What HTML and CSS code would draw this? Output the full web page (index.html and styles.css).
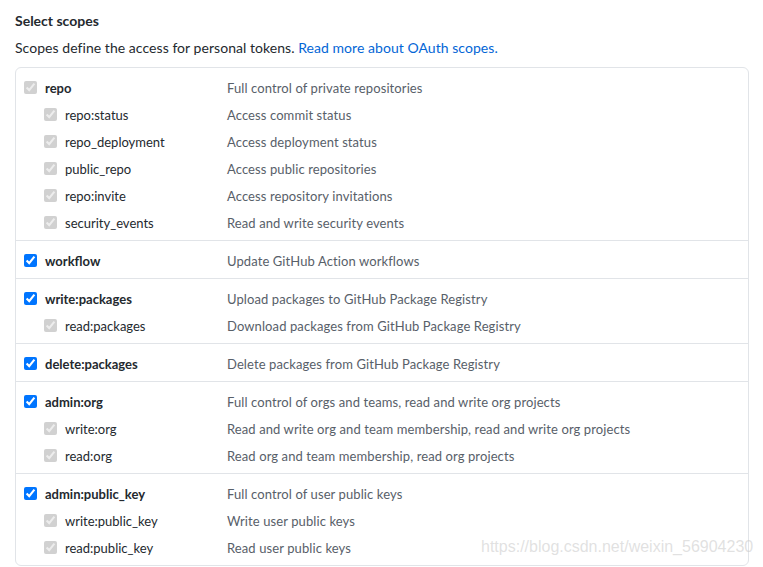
FILE: index.html
```html
<!DOCTYPE html>
<html lang="en">
<head>
    <meta charset="UTF-8">
    <title>Select scopes</title>
    <link rel="stylesheet" href="styles.css">
</head>
<body>

    <!-- Scopes -->
    <div class="scopes">
        <h3>Select scopes</h3>
        <p class="note">Scopes define the access for personal tokens. <a href="#">Read more about OAuth scopes.</a></p>

        <div class="box">
            <div class="group">
                <label class="row"><input type="checkbox" checked disabled><span class="name top">repo</span><span class="desc">Full control of private repositories</span></label>
                <label class="row sub"><input type="checkbox" checked disabled><span class="name">repo:status</span><span class="desc">Access commit status</span></label>
                <label class="row sub"><input type="checkbox" checked disabled><span class="name">repo_deployment</span><span class="desc">Access deployment status</span></label>
                <label class="row sub"><input type="checkbox" checked disabled><span class="name">public_repo</span><span class="desc">Access public repositories</span></label>
                <label class="row sub"><input type="checkbox" checked disabled><span class="name">repo:invite</span><span class="desc">Access repository invitations</span></label>
                <label class="row sub"><input type="checkbox" checked disabled><span class="name">security_events</span><span class="desc">Read and write security events</span></label>
            </div>
            <div class="group">
                <label class="row"><input type="checkbox" checked><span class="name top">workflow</span><span class="desc">Update GitHub Action workflows</span></label>
            </div>
            <div class="group">
                <label class="row"><input type="checkbox" checked><span class="name top">write:packages</span><span class="desc">Upload packages to GitHub Package Registry</span></label>
                <label class="row sub"><input type="checkbox" checked disabled><span class="name">read:packages</span><span class="desc">Download packages from GitHub Package Registry</span></label>
            </div>
            <div class="group">
                <label class="row"><input type="checkbox" checked><span class="name top">delete:packages</span><span class="desc">Delete packages from GitHub Package Registry</span></label>
            </div>
            <div class="group">
                <label class="row"><input type="checkbox" checked><span class="name top">admin:org</span><span class="desc">Full control of orgs and teams, read and write org projects</span></label>
                <label class="row sub"><input type="checkbox" checked disabled><span class="name">write:org</span><span class="desc">Read and write org and team membership, read and write org projects</span></label>
                <label class="row sub"><input type="checkbox" checked disabled><span class="name">read:org</span><span class="desc">Read org and team membership, read org projects</span></label>
            </div>
            <div class="group">
                <label class="row"><input type="checkbox" checked><span class="name top">admin:public_key</span><span class="desc">Full control of user public keys</span></label>
                <label class="row sub"><input type="checkbox" checked disabled><span class="name">write:public_key</span><span class="desc">Write user public keys</span></label>
                <label class="row sub"><input type="checkbox" checked disabled><span class="name">read:public_key</span><span class="desc">Read user public keys</span></label>
            </div>
        </div>
    </div>

    <div class="watermark">https://blog.csdn.net/weixin_56904230</div>

</body>
</html>
```

FILE: styles.css
```css
* {
    box-sizing: border-box;
    margin: 0;
    padding: 0;
}

body {
    font-family: Lato, 'Noto Sans', sans-serif;
    font-size: 13px;
    color: #24292e;
    background: #fff;
    padding: 11px 14px 0 15px;
    position: relative;
    overflow: hidden;
}

h3 {
    font-size: 14px;
    font-weight: 700;
    line-height: 20px;
}

.note {
    margin-top: 7px;
    font-size: 14px;
    line-height: 20px;
    letter-spacing: 0.05px;
    color: #24292e;
}

.note a {
    color: #0366d6;
    text-decoration: none;
}

.box {
    margin-top: 9px;
    border: 1px solid #e1e4e8;
    border-radius: 6px;
}

.group {
    padding: 6px 0 4px 7px;
    border-top: 1px solid #e1e4e8;
}

.group:first-child {
    border-top: none;
}

.row {
    display: flex;
    align-items: center;
    height: 27px;
}

.row input {
    width: 13px;
    height: 13px;
    margin: 0 8px 0 1px;
}

.row.sub input {
    margin-left: 21px;
}

.name {
    width: 162px;
    color: #24292e;
}

.name.top {
    font-weight: 700;
    width: 182px;
}

.desc {
    color: #586069;
    letter-spacing: 0.1px;
}

.watermark {
    position: absolute;
    left: 481px;
    top: 538px;
    font-family: 'Liberation Sans', Arial, sans-serif;
    font-size: 16px;
    color: rgba(200, 200, 200, 0.55);
    pointer-events: none;
}
```
